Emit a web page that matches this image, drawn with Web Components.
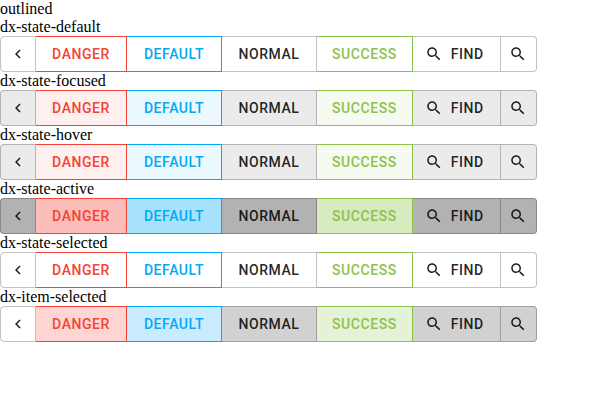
<!DOCTYPE html>
<html lang="en">
<head>
<meta charset="utf-8">
<title>Button group: outlined</title>
<style>
  body { margin: 0; background: #fff; color: #000; font: 16px/18px "Liberation Serif", serif; }
</style>
</head>
<body>
<button-group-sheet>outlined</button-group-sheet>
<script>
  const ICONS = {
    back: '<path d="M15.41 7.41 14 6l-6 6 6 6 1.41-1.41L10.83 12z"/>',
    find: '<path d="M15.5 14h-.79l-.28-.27C15.41 12.59 16 11.11 16 9.5 16 5.91 13.09 3 9.5 3S3 5.91 3 9.5 5.91 16 9.5 16c1.61 0 3.09-.59 4.23-1.57l.27.28v.79l5 4.99L20.49 19l-4.99-5zm-6 0C7.01 14 5 11.99 5 9.5S7.01 5 9.5 5 14 7.01 14 9.5 11.99 14 9.5 14z"/>'
  };

  class GroupIcon extends HTMLElement {
    connectedCallback() {
      this.attachShadow({ mode: 'open' }).innerHTML = `
        <style>
          :host { display: block; flex: none; width: 18px; height: 18px; }
          svg { display: block; width: 100%; height: 100%; fill: currentColor; }
        </style>
        <svg viewBox="0 0 24 24" aria-hidden="true">${ICONS[this.getAttribute('name')]}</svg>`;
    }
  }
  customElements.define('group-icon', GroupIcon);

  class GroupButton extends HTMLElement {
    connectedCallback() {
      const icon = this.getAttribute('icon');
      const label = this.getAttribute('label');
      this.attachShadow({ mode: 'open' }).innerHTML = `
        <style>
          :host {
            display: block;
            --tint: 0, 0, 0;
            --ink: rgba(0, 0, 0, .87);
            --line: rgba(0, 0, 0, .24);
            --fill: 0;
            --min: 95px;
          }
          :host([state="focused"]), :host([state="hover"]) { --fill: .08; }
          :host([state="active"]) { --fill: .3; }
          :host([state="item-selected"]) { --fill: .18; }
          :host([type]) { --ink: rgb(var(--tint)); --line: rgb(var(--tint)); }
          :host([type="danger"]) { --tint: 244, 67, 54; --min: 91px; }
          :host([type="default"]) { --tint: 3, 169, 244; }
          :host([type="success"]) { --tint: 139, 195, 74; }
          :host([type][state="active"]) { --fill: .35; }
          :host([type][state="item-selected"]) { --fill: .22; }
          button {
            display: flex; align-items: center; justify-content: center; gap: 8px;
            box-sizing: border-box; min-width: var(--min); height: 36px; margin: 0; padding: 0 15px;
            border: solid var(--line); border-width: 1px 1px 1px 0;
            background: rgba(var(--tint), var(--fill)); color: var(--ink);
            font: 500 14px/18px Roboto, sans-serif; letter-spacing: .04em;
            text-transform: uppercase; white-space: nowrap; cursor: pointer;
          }
          button.with-icon { min-width: 88px; padding: 0 16px 0 12px; }
          button.icon-only { min-width: 36px; padding: 0; }
          :host([first]) button { border-left-width: 1px; border-radius: 4px 0 0 4px; }
          :host([last]) button { border-radius: 0 4px 4px 0; }
        </style>
        <button type="button" class="${icon ? (label ? 'with-icon' : 'icon-only') : ''}"
          ${label ? '' : `aria-label="${icon}"`}>${icon ? `<group-icon name="${icon}"></group-icon>` : ''}${label ? `<span>${label}</span>` : ''}</button>`;
    }
  }
  customElements.define('group-button', GroupButton);

  class ButtonGroup extends HTMLElement {
    connectedCallback() {
      const state = this.getAttribute('state');
      const backState = state === 'item-selected' ? 'default' : state;
      this.attachShadow({ mode: 'open' }).innerHTML = `
        <style>
          :host { display: block; }
          .row { display: flex; }
        </style>
        <div><slot></slot></div>
        <div class="row" role="group">
          <group-button first icon="back" state="${backState}"></group-button>
          <group-button type="danger" label="Danger" state="${state}"></group-button>
          <group-button type="default" label="Default" state="${state}"></group-button>
          <group-button label="Normal" state="${state}"></group-button>
          <group-button type="success" label="Success" state="${state}"></group-button>
          <group-button icon="find" label="Find" state="${state}"></group-button>
          <group-button last icon="find" state="${state}"></group-button>
        </div>`;
    }
  }
  customElements.define('button-group', ButtonGroup);

  class ButtonGroupSheet extends HTMLElement {
    connectedCallback() {
      this.attachShadow({ mode: 'open' }).innerHTML = `
        <style>:host { display: block; }</style>
        <div><slot></slot></div>
        <button-group state="default">dx-state-default</button-group>
        <button-group state="focused">dx-state-focused</button-group>
        <button-group state="hover">dx-state-hover</button-group>
        <button-group state="active">dx-state-active</button-group>
        <button-group state="selected">dx-state-selected</button-group>
        <button-group state="item-selected">dx-item-selected</button-group>`;
    }
  }
  customElements.define('button-group-sheet', ButtonGroupSheet);
</script>
</body>
</html>
